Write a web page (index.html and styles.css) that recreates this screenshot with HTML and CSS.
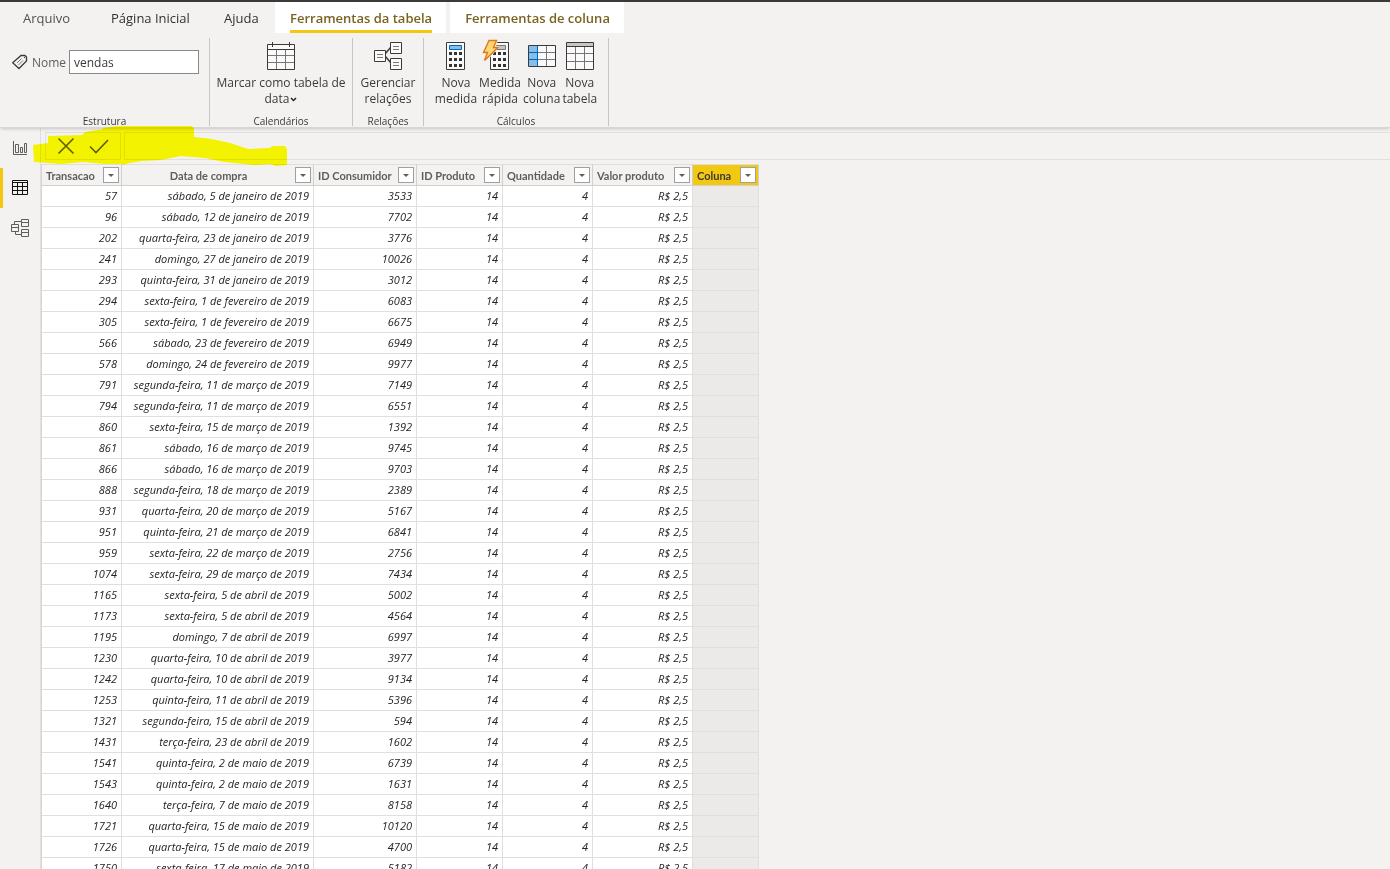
FILE: index.html
```html
<!DOCTYPE html>
<html lang="pt-BR">
<head>
<meta charset="utf-8">
<title>vendas</title>
<link rel="stylesheet" href="styles.css">
</head>
<body>
<div class="app">
<nav class="tabs">
<a class="tab tab-file" href="#">Arquivo</a>
<a class="tab tab-home" href="#">Página Inicial</a>
<a class="tab tab-help" href="#">Ajuda</a>
<a class="tab context active" href="#"><span>Ferramentas da tabela</span></a>
<a class="tab context" href="#"><span>Ferramentas de coluna</span></a>
</nav>
<header class="ribbon">
<section class="group structure">
<div class="name-row">
<svg class="tag" width="16" height="16" viewBox="0 0 16 16" fill="none" stroke="#3b3a39"><path d="M9 1.500h4l1.500 1.500v4L7 14.500 .700 8.700z" stroke-width="1.300"/><path d="M5 9l4.500-4.500M6.500 11L11 6.500" stroke="#777"/><path d="M12 3h1v1h-1z" fill="#333" stroke="none"/></svg>
<label for="name">Nome</label>
<input id="name" class="name-box" type="text" value="vendas">
</div>
<h2 class="caption">Estrutura</h2>
</section>
<section class="group calendars">
<div class="tools"><button class="tool" type="button">
<svg width="30" height="30" viewBox="0 0 30 30" fill="none" stroke="#3b3a39"><path d="M1.500 3.500h27v25h-27z" fill="#fafafa"/><path d="M2 14.500h26M2 21.500h26M10.500 9v19M19.500 9v19" stroke="#777"/><path d="M1 8.500h28M6.500 1v5M23.500 1v5"/></svg>
<span>Marcar como tabela de<br>data<svg class="chev" width="7" height="5" viewBox="0 0 7 5" fill="none" stroke="#222" stroke-width="1.500"><path d="M1 1l2.500 2.500L6 1"/></svg></span></button></div>
<h2 class="caption">Calendários</h2>
</section>
<section class="group relations">
<div class="tools"><button class="tool" type="button">
<svg width="30" height="30" viewBox="0 0 30 30" fill="none" stroke="#3b3a39"><path d="M12 13l6-7M12 15l6 7" stroke-width="1.500"/><path d="M1.500 9.500h11v11h-11zM17.500 1.500h11v11h-11zM17.500 17.500h11v11h-11z" fill="#fafafa"/><path d="M4 13.500h6M4 16.500h6M20 5.500h6M20 8.500h6M20 21.500h6M20 24.500h6" stroke="#777"/></svg>
<span>Gerenciar<br>relações</span></button></div>
<h2 class="caption">Relações</h2>
</section>
<section class="group calculations">
<div class="tools">
<button class="tool" type="button">
<svg width="30" height="30" viewBox="0 0 30 30"><path d="M5.500 1.500h18v27h-18z" fill="#fafafa" stroke="#3b3a39"/><path d="M8.500 4.500h12v4h-12z" fill="#83beec" stroke="#0067b8"/><path d="M8 11h3v3H8zm5 0h3v3h-3zm5 0h3v3h-3zM8 17h3v3H8zm5 0h3v3h-3zm5 0h3v3h-3zM8 23h3v3H8zm5 0h3v3h-3zm5 0h3v3h-3z" fill="#333"/></svg>
<span>Nova<br>medida</span></button>
<button class="tool" type="button">
<svg width="30" height="30" viewBox="0 0 30 30"><path d="M5.500 1.500h18v27h-18z" fill="#fafafa" stroke="#3b3a39"/><path d="M8.500 4.500h12v4h-12z" fill="#c8c6c4" stroke="#777"/><path d="M8 11h3v3H8zm5 0h3v3h-3zm5 0h3v3h-3zM8 17h3v3H8zm5 0h3v3h-3zm5 0h3v3h-3zM8 23h3v3H8zm5 0h3v3h-3zm5 0h3v3h-3z" fill="#333"/><path d="M3-1h10l-2 6h4L2 20H0V11z" fill="#f3f2f1"/><path d="M4-.500h7.500L8.500 6.500h4.500L-.500 19.500 2.500 11.500h-4z" fill="#fbd67b" stroke="#e07a12" stroke-width="1.400"/></svg>
<span>Medida<br>rápida</span></button>
<button class="tool" type="button">
<svg width="30" height="30" viewBox="0 0 30 30" fill="none"><path d="M1.500 4.500h27v21h-27z" fill="#fafafa"/><path d="M2 5h9v20H2z" fill="#83beec"/><path d="M11 11.500h17M11 18.500h17M19.500 5v20" stroke="#777"/><path d="M2 11.500h9M2 18.500h9M10.500 5v20" stroke="#0067b8"/><path d="M1.500 4.500h27v21h-27z" stroke="#3b3a39"/></svg>
<span>Nova<br>coluna</span></button>
<button class="tool" type="button">
<svg width="30" height="30" viewBox="0 0 30 30" fill="none"><path d="M1.500 1.500h27v27h-27z" fill="#fafafa"/><path d="M2 2h26v3H2z" fill="#c8c6c4"/><path d="M2 12.500h26M2 20.500h26M10.500 6v22M19.500 6v22" stroke="#777"/><path d="M1.500 1.500h27v27h-27zM2 5.500h26" stroke="#3b3a39"/></svg>
<span>Nova<br>tabela</span></button>
</div>
<h2 class="caption">Cálculos</h2>
</section>
</header>
<div class="workspace">
<aside class="rail">
<button class="view" type="button" aria-label="Relatório"><svg width="18" height="18" viewBox="0 0 18 18" fill="none" stroke="#605e5c"><path d="M2.500 2v13.500H16M4.500 5.500h3v8h-3zM9.500 8.500h2v5h-2zM13.500 4.500h2v9h-2z"/></svg></button>
<button class="view current" type="button" aria-label="Dados"><svg width="18" height="18" viewBox="0 0 18 18" fill="none" stroke="#111"><path d="M1.500 1.500h15v14h-15zM1 3.500h16M2 7.500h14M2 11.500h14M6.500 4v11M11.500 4v11"/></svg></button>
<button class="view" type="button" aria-label="Modelo"><svg width="20" height="20" viewBox="0 0 20 20" fill="none" stroke="#605e5c"><path d="M1.500 6.500h7v7h-7zM11.500 1.500h7v7h-7zM11.500 11.500h7v7h-7zM2 9.500h6M12 4.500h6M12 14.500h6M4.500 6V3.500H11M5.500 14v2.500H11"/></svg></button>
</aside>
<main class="data">
<div class="formula">
<div class="commit">
<button type="button" aria-label="Cancelar"><svg width="18" height="18" viewBox="0 0 18 18" fill="none" stroke="#605e5c" stroke-width="1.600"><path d="M1.500 1.500l15 15M16.500 1.500l-15 15"/></svg></button>
<button type="button" aria-label="Confirmar"><svg width="20" height="18" viewBox="0 0 20 18" fill="none" stroke="#605e5c" stroke-width="1.600"><path d="M1 9.500l6 6L19 3"/></svg></button>
</div>
<input class="expression" type="text" aria-label="Fórmula">
<svg class="marker" width="254" height="42" viewBox="33 125 254 42"><path d="M33 145l15-2v-7l34-1 3-3 18-3v-1l15-2h73l3 2v9l18 2 18 4 18 6 22-1 2-2h13l2 3v16l-11 1-6-2-15 1-31-3-19-4-24-2-20 4-20 1-11 2-8 2v-1h-17l-22-2-22 2-12-1-15-1z" fill="#ff0"/></svg>
</div>
<table class="grid">
<colgroup><col class="c1"><col class="c2"><col class="c3"><col class="c4"><col class="c5"><col class="c6"><col class="c7"></colgroup>
<thead><tr>
<th><div><span>Transacao</span><button type="button" aria-label="Filtrar Transacao"></button></div></th>
<th class="centered"><div><span>Data de compra</span><button type="button" aria-label="Filtrar Data de compra"></button></div></th>
<th><div><span>ID Consumidor</span><button type="button" aria-label="Filtrar ID Consumidor"></button></div></th>
<th><div><span>ID Produto</span><button type="button" aria-label="Filtrar ID Produto"></button></div></th>
<th><div><span>Quantidade</span><button type="button" aria-label="Filtrar Quantidade"></button></div></th>
<th><div><span>Valor produto</span><button type="button" aria-label="Filtrar Valor produto"></button></div></th>
<th class="picked"><div><span>Coluna</span><button type="button" aria-label="Filtrar Coluna"></button></div></th>
</tr></thead>
<tbody>
<tr><td>57<td>sábado, 5 de janeiro de 2019<td>3533<td>14<td>4<td>R$ 2,5<td></tr>
<tr><td>96<td>sábado, 12 de janeiro de 2019<td>7702<td>14<td>4<td>R$ 2,5<td></tr>
<tr><td>202<td>quarta-feira, 23 de janeiro de 2019<td>3776<td>14<td>4<td>R$ 2,5<td></tr>
<tr><td>241<td>domingo, 27 de janeiro de 2019<td>10026<td>14<td>4<td>R$ 2,5<td></tr>
<tr><td>293<td>quinta-feira, 31 de janeiro de 2019<td>3012<td>14<td>4<td>R$ 2,5<td></tr>
<tr><td>294<td>sexta-feira, 1 de fevereiro de 2019<td>6083<td>14<td>4<td>R$ 2,5<td></tr>
<tr><td>305<td>sexta-feira, 1 de fevereiro de 2019<td>6675<td>14<td>4<td>R$ 2,5<td></tr>
<tr><td>566<td>sábado, 23 de fevereiro de 2019<td>6949<td>14<td>4<td>R$ 2,5<td></tr>
<tr><td>578<td>domingo, 24 de fevereiro de 2019<td>9977<td>14<td>4<td>R$ 2,5<td></tr>
<tr><td>791<td>segunda-feira, 11 de março de 2019<td>7149<td>14<td>4<td>R$ 2,5<td></tr>
<tr><td>794<td>segunda-feira, 11 de março de 2019<td>6551<td>14<td>4<td>R$ 2,5<td></tr>
<tr><td>860<td>sexta-feira, 15 de março de 2019<td>1392<td>14<td>4<td>R$ 2,5<td></tr>
<tr><td>861<td>sábado, 16 de março de 2019<td>9745<td>14<td>4<td>R$ 2,5<td></tr>
<tr><td>866<td>sábado, 16 de março de 2019<td>9703<td>14<td>4<td>R$ 2,5<td></tr>
<tr><td>888<td>segunda-feira, 18 de março de 2019<td>2389<td>14<td>4<td>R$ 2,5<td></tr>
<tr><td>931<td>quarta-feira, 20 de março de 2019<td>5167<td>14<td>4<td>R$ 2,5<td></tr>
<tr><td>951<td>quinta-feira, 21 de março de 2019<td>6841<td>14<td>4<td>R$ 2,5<td></tr>
<tr><td>959<td>sexta-feira, 22 de março de 2019<td>2756<td>14<td>4<td>R$ 2,5<td></tr>
<tr><td>1074<td>sexta-feira, 29 de março de 2019<td>7434<td>14<td>4<td>R$ 2,5<td></tr>
<tr><td>1165<td>sexta-feira, 5 de abril de 2019<td>5002<td>14<td>4<td>R$ 2,5<td></tr>
<tr><td>1173<td>sexta-feira, 5 de abril de 2019<td>4564<td>14<td>4<td>R$ 2,5<td></tr>
<tr><td>1195<td>domingo, 7 de abril de 2019<td>6997<td>14<td>4<td>R$ 2,5<td></tr>
<tr><td>1230<td>quarta-feira, 10 de abril de 2019<td>3977<td>14<td>4<td>R$ 2,5<td></tr>
<tr><td>1242<td>quarta-feira, 10 de abril de 2019<td>9134<td>14<td>4<td>R$ 2,5<td></tr>
<tr><td>1253<td>quinta-feira, 11 de abril de 2019<td>5396<td>14<td>4<td>R$ 2,5<td></tr>
<tr><td>1321<td>segunda-feira, 15 de abril de 2019<td>594<td>14<td>4<td>R$ 2,5<td></tr>
<tr><td>1431<td>terça-feira, 23 de abril de 2019<td>1602<td>14<td>4<td>R$ 2,5<td></tr>
<tr><td>1541<td>quinta-feira, 2 de maio de 2019<td>6739<td>14<td>4<td>R$ 2,5<td></tr>
<tr><td>1543<td>quinta-feira, 2 de maio de 2019<td>1631<td>14<td>4<td>R$ 2,5<td></tr>
<tr><td>1640<td>terça-feira, 7 de maio de 2019<td>8158<td>14<td>4<td>R$ 2,5<td></tr>
<tr><td>1721<td>quarta-feira, 15 de maio de 2019<td>10120<td>14<td>4<td>R$ 2,5<td></tr>
<tr><td>1726<td>quarta-feira, 15 de maio de 2019<td>4700<td>14<td>4<td>R$ 2,5<td></tr>
<tr><td>1750<td>sexta-feira, 17 de maio de 2019<td>5182<td>14<td>4<td>R$ 2,5<td></tr>
</tbody>
</table>
</main>
</div>
</div>
</body>
</html>
```
FILE: styles.css
```css
* { box-sizing: border-box; }
body { margin: 0; background: #f3f2f1; color: #3b3a39; font-family: "Open Sans", "Noto Sans", sans-serif; font-size: 12px; }
button { font: inherit; color: inherit; border: 0; padding: 0; background: none; }
.app { height: 100vh; display: flex; flex-direction: column; overflow: hidden; border-top: 2px solid #3b3a39; }

.tabs { display: flex; height: 31px; padding-left: 23px; flex: none; }
.tab { color: #323130; text-decoration: none; font-size: 13px; line-height: 32px; white-space: nowrap; }
.tab-file { width: 88px; color: #55504c; }
.tab-home { width: 113px; }
.tab-help { width: 51px; }
.context { background: #fff; padding: 0 14px 0 15px; margin-right: 4px; color: #7a6320; font-weight: 600; }
.context span { display: block; height: 31px; }
.active span { border-bottom: 3px solid #f2c811; }

.ribbon { display: flex; flex: none; height: 95px; padding: 5px 0 1px; border-bottom: 1px solid #d8d6d4; box-shadow: 0 2px 3px -1px #0000002e; z-index: 1; }
.group { border-right: 1px solid #c8c6c4; display: flex; flex-direction: column; justify-content: space-between; }
.structure { width: 210px; }
.calendars { width: 143px; }
.relations { width: 71px; }
.calculations { width: 185px; }
.caption { margin: 0; font-size: 10px; font-weight: 400; line-height: 10px; text-align: center; }
.name-row { display: flex; align-items: center; padding: 12px 10px 0 12px; gap: 4px; }
.name-row label { width: 33px; color: #605e5c; }
.name-box { flex: 1; min-width: 0; height: 24px; border: 1px solid #8a8886; background: #fff; padding: 0 4px; font: inherit; color: #3b3a39; }
.tools { display: flex; justify-content: center; padding-top: 3px; gap: 2px; }
.tool { display: flex; flex-direction: column; align-items: center; line-height: 16px; white-space: nowrap; gap: 4px; }
.tool > svg { overflow: visible; }
.chev { margin-left: 1px; vertical-align: 1px; }

.workspace { display: flex; flex: 1; min-height: 0; }
.rail { width: 41px; border-right: 1px solid #e1dfdd; flex: none; }
.view { display: grid; place-items: center; width: 100%; height: 40px; border-left: 3px solid transparent; padding-right: 3px; }
.current { border-left-color: #f2c811; }
.data { flex: 1; min-width: 0; }
.formula { position: relative; display: flex; gap: 3px; height: 32px; padding: 4px 0 0 4px; }
.commit { display: flex; align-items: center; justify-content: center; gap: 14px; width: 76px; border: 1px solid #e1dfdd; }
.commit button { display: grid; }
.expression { flex: 1; min-width: 0; border: 1px solid #e1dfdd; border-right: 0; background: none; }
.marker { position: absolute; left: -8px; top: -3px; mix-blend-mode: multiply; pointer-events: none; z-index: 2; }

.grid { table-layout: fixed; width: 718px; margin-top: 4px; border-collapse: separate; border-spacing: 0; border-left: 1px solid #d8d6d4; background: #fff; font-family: "Open Sans", sans-serif; }
.c1 { width: 80px; }
.c2 { width: 192px; }
.c3 { width: 103px; }
.c4 { width: 86px; }
.c5 { width: 90px; }
.c6 { width: 100px; }
.c7 { width: 66px; }
.grid th { height: 22px; padding: 0 2px 0 4px; background: #f3f2f1; border: 1px solid #d2d0ce; border-left: 0; border-top-color: #e1dfdd; color: #605e5c; font-family: Lato, sans-serif; font-size: 11px; font-weight: 700; text-align: left; }
.grid th.centered { text-align: center; padding-left: 0; }
.grid th div { display: flex; align-items: center; }
.grid th span { flex: 1; white-space: nowrap; }
.grid th button { display: grid; place-items: center; flex: none; width: 16px; height: 16px; border: 1px solid #a19f9d; background: #fff; }
.grid th button::after { content: ""; border: 3px solid transparent; border-top-color: #605e5c; border-bottom: 0; }
.grid .picked { background: #f2c811; color: #3b3a39; }
.grid td { height: 21px; padding: 0 4px; border-right: 1px solid #e1dfdd; border-bottom: 1px solid #e1dfdd; text-align: right; font-size: 11px; font-style: italic; line-height: 20px; white-space: nowrap; color: #252423; }
.grid td:last-child { background: #eceae8; }
```
